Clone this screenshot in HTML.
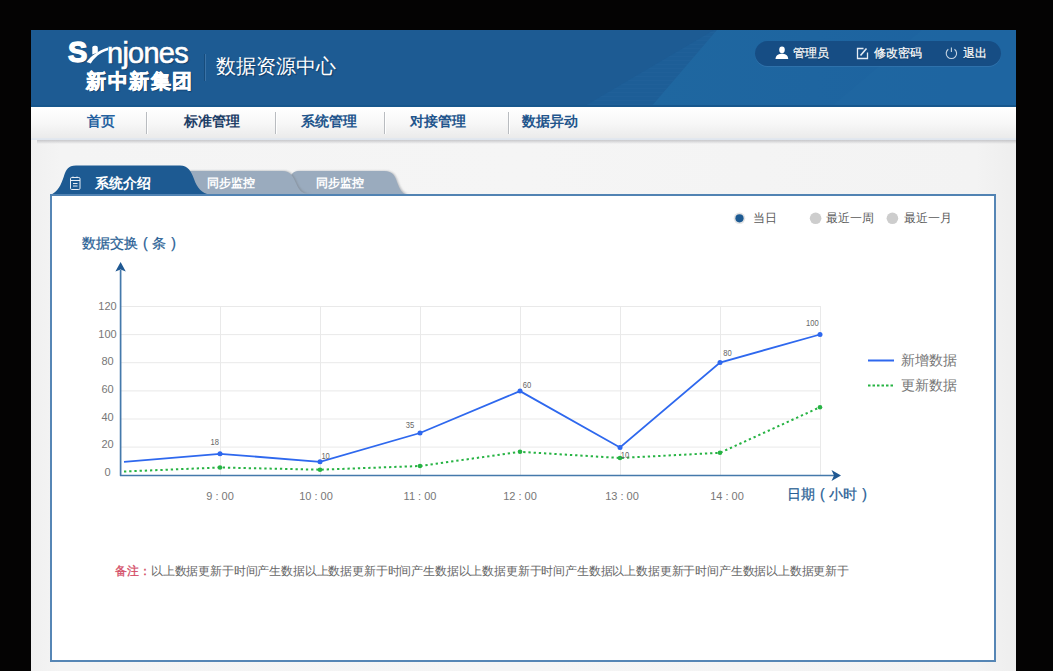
<!DOCTYPE html>
<html><head><meta charset="utf-8">
<style>
*{margin:0;padding:0;box-sizing:border-box}
html,body{width:1053px;height:671px;overflow:hidden;background:#040303;font-family:"Liberation Sans",sans-serif}
.abs{position:absolute}
#page{position:absolute;left:31px;top:30px;width:985px;height:641px;background:linear-gradient(90deg,#f0f0f0,#f4f4f4 3%,#f5f5f5 50%,#f3f3f3 96%,#eeeeee)}
#nav{position:absolute;left:31px;top:107px;width:985px;height:33px;background:linear-gradient(#ffffff,#f7f7f7 50%,#ebebeb 93%,#e3e8ef 94%,#dfe5ee);}
#navsh{position:absolute;left:37px;top:140px;width:979px;height:4px;background:linear-gradient(rgba(170,170,175,0.6),rgba(210,210,210,0))}
.nv{position:absolute;top:112px;font-size:14px;font-weight:bold;color:#22558c;line-height:18px;white-space:nowrap}
.sep{position:absolute;top:112px;width:2px;height:22px;background:linear-gradient(90deg,#b9bcc0 50%,#ffffff 50%)}
#box{position:absolute;left:50px;top:194px;width:946px;height:468px;background:#fff;border:2px solid #5686b5}
.t{position:absolute;white-space:nowrap;line-height:1}
</style></head><body>
<div id="page"></div>
<svg class="abs" style="left:31px;top:30px" width="985" height="77" viewBox="31 30 985 77">
 <defs><pattern id="stp" width="6" height="4" patternUnits="userSpaceOnUse"><rect width="6" height="1" fill="#2a6aa3" opacity="0.18"/></pattern><linearGradient id="hg" x1="651" y1="0" x2="1016" y2="0" gradientUnits="userSpaceOnUse">
  <stop offset="0" stop-color="#1f67a0"/><stop offset="0.45" stop-color="#1e65a0"/><stop offset="1" stop-color="#1c62a0"/></linearGradient></defs>
 <rect x="31" y="30" width="985" height="77" fill="#1d5b93"/>
 <polygon points="583,107 714,30 1016,30 1016,107" fill="#1d5e97"/>
 <polygon points="583,107 714,30 717,30 651,107" fill="url(#stp)"/>
 <polygon points="651,107 717,30 1016,30 1016,107" fill="url(#hg)"/>
 <polygon points="831,107 922,30 1016,30 1016,107" fill="#1f67a2" opacity="0.6"/>
 <rect x="31" y="105" width="985" height="2" fill="#17578d"/>
</svg>

<!-- logo -->
<div class="t" style="left:68px;top:38px;font-size:29px;color:#fff;font-weight:bold;-webkit-text-stroke:1.4px #fff;text-shadow:1px 1px 1px rgba(0,20,50,0.5)">S</div>
<svg class="abs" style="left:0;top:0" width="300" height="100" viewBox="0 0 300 100">
 <path d="M86.5 62 C91.5 55.5 97.5 50.8 108.2 47.4 L108.2 50.2 C99.5 52.8 94.5 57.5 90.8 63.5 Z" fill="#fff"/>
 <path d="M92.3 54.5 L92.3 47.6 Q92.3 45.8 94.5 45.8 L95.8 45.8 Q97.8 45.8 97.8 47.8 L97.8 52.5 Z" fill="#fff"/>
</svg>
<div class="t" style="left:107px;top:38.5px;font-size:29px;color:#fff;letter-spacing:-0.75px;-webkit-text-stroke:0.6px #fff;text-shadow:1px 1px 1px rgba(0,20,50,0.5)">njones</div>
<div class="t" style="left:86px;top:71px;font-size:20px;color:#fff;font-weight:bold;letter-spacing:1.6px;-webkit-text-stroke:0.7px #fff;text-shadow:1px 1px 1px rgba(0,20,50,0.5)">新中新集团</div>
<div class="abs" style="left:204px;top:54px;width:1px;height:27px;background:#174c7c"></div>
<div class="abs" style="left:205px;top:54px;width:1px;height:27px;background:#3a72a6"></div>
<div class="t" style="left:216px;top:56px;font-size:20px;color:#fff;text-shadow:1px 1px 1px rgba(0,20,50,0.45)">数据资源中心</div>
<!-- pill -->
<div class="abs" style="left:755px;top:41px;width:246px;height:25px;border-radius:13px;background:#164d84;box-shadow:0 1px 0 rgba(120,170,220,0.18)"></div>
<svg class="abs" style="left:0;top:0" width="1053" height="100" viewBox="0 0 1053 100">
 <ellipse cx="782" cy="49.8" rx="2.8" ry="3.4" fill="#fff"/>
 <path d="M775.5 59 C775.5 56 778 54 781 53.8 L783 53.8 C786 54 788.2 56 788.2 59 Z" fill="#fff"/>
 <path d="M867.5 52.5 L867.5 58.5 L857.5 58.5 L857.5 48.5 L863.5 48.5" fill="none" stroke="#e6edf5" stroke-width="1.3"/>
 <path d="M860.5 55.5 L866.5 48.5" stroke="#e6edf5" stroke-width="1.6"/>
 <path d="M948.3 49.2 A5.2 5.2 0 1 0 954.5 49.2" fill="none" stroke="#c5d4e3" stroke-width="1.1"/>
 <line x1="951.4" y1="47.5" x2="951.4" y2="52" stroke="#c5d4e3" stroke-width="1.1"/>
</svg>
<div class="t" style="left:793px;top:46.5px;font-size:12px;color:#fff;-webkit-text-stroke:0.2px #fff;text-shadow:0 1px 1px rgba(0,0,0,0.3)">管理员</div>
<div class="t" style="left:874px;top:46.5px;font-size:12px;color:#fff;-webkit-text-stroke:0.2px #fff;text-shadow:0 1px 1px rgba(0,0,0,0.3)">修改密码</div>
<div class="t" style="left:963px;top:46.5px;font-size:12px;color:#fff;-webkit-text-stroke:0.2px #fff;text-shadow:0 1px 1px rgba(0,0,0,0.3)">退出</div>

<!-- nav -->
<div id="nav"></div>
<div id="navsh"></div>
<div class="nv" style="left:87px;color:#2461a0">首页</div>
<div class="sep" style="left:146px"></div>
<div class="nv" style="left:184px;color:#1d3e66">标准管理</div>
<div class="sep" style="left:275px"></div>
<div class="nv" style="left:301px">系统管理</div>
<div class="sep" style="left:384px"></div>
<div class="nv" style="left:410px">对接管理</div>
<div class="sep" style="left:508px"></div>
<div class="nv" style="left:522px">数据异动</div>

<!-- content box -->
<div id="box"></div>

<!-- tabs -->
<svg class="abs" style="left:0;top:0" width="1053" height="671" viewBox="0 0 1053 671">
 <defs>
  <filter id="sh" x="-10%" y="-30%" width="120%" height="160%"><feGaussianBlur stdDeviation="1.2"/></filter>
 </defs>
 <!-- tab2 -->
 <path d="M282 194 C292 186 290 171 300 171 L385 171 C394 171 396 176 398 182 C401 190 404 194 410 194 Z" fill="#8a8f96" opacity="0.6" filter="url(#sh)"/>
 <path d="M280 194 C290 186 288 171 298 171 L384 171 C393 171 395 176 397 182 C400 190 402 194 407 194 Z" fill="#9aabbe"/>
 <!-- tab1 -->
 <path d="M170 194 L170 171 L283 171 C292 171 294 177 297 183 C300 190 304 194 311 194 Z" fill="#7d848c" opacity="0.7" filter="url(#sh)"/>
 <path d="M170 194 L170 171 L282 171 C291 171 293 177 296 183 C299 190 302 194 309 194 Z" fill="#9aabbe"/>
 <!-- active -->
 <path d="M50 195 C58 192 61 185 64 176 C66 170 68 165.5 76 165.5 L180 165.5 C188 165.5 191 171 194 179 C197 188 202 193 210 195 Z" fill="#1d5a92"/>
 <!-- icon -->
 <rect x="70.5" y="177.5" width="9.5" height="12" rx="1.2" fill="none" stroke="#e8eef5" stroke-width="1"/>
 <line x1="70.5" y1="180.5" x2="80" y2="180.5" stroke="#e8eef5" stroke-width="1"/>
 <line x1="73" y1="183.5" x2="77.5" y2="183.5" stroke="#e8eef5" stroke-width="1"/>
 <line x1="73" y1="186" x2="77.5" y2="186" stroke="#e8eef5" stroke-width="1"/>
 <rect x="72.5" y="176.5" width="1" height="1.5" fill="#e8eef5"/><rect x="76.5" y="176.5" width="1" height="1.5" fill="#e8eef5"/>
 <rect x="50" y="194" width="946" height="2" fill="#5183b3"/>
</svg>
<div class="t" style="left:95px;top:176px;font-size:14px;font-weight:bold;color:#fff">系统介绍</div>
<div class="t" style="left:207px;top:177px;font-size:12px;font-weight:bold;color:#fff">同步监控</div>
<div class="t" style="left:316px;top:177px;font-size:12px;font-weight:bold;color:#fff">同步监控</div>


<svg class="abs" style="left:0;top:0" width="1053" height="671" viewBox="0 0 1053 671" font-family="Liberation Sans, sans-serif">
<line x1="121" y1="306.5" x2="820" y2="306.5" stroke="#e9e9e9" stroke-width="1"/>
<line x1="121" y1="334.6" x2="820" y2="334.6" stroke="#e9e9e9" stroke-width="1"/>
<line x1="121" y1="362.7" x2="820" y2="362.7" stroke="#e9e9e9" stroke-width="1"/>
<line x1="121" y1="390.9" x2="820" y2="390.9" stroke="#e9e9e9" stroke-width="1"/>
<line x1="121" y1="419.0" x2="820" y2="419.0" stroke="#e9e9e9" stroke-width="1"/>
<line x1="121" y1="447.1" x2="820" y2="447.1" stroke="#e9e9e9" stroke-width="1"/>
<line x1="220.5" y1="306" x2="220.5" y2="475" stroke="#e9e9e9" stroke-width="1"/>
<line x1="320.5" y1="306" x2="320.5" y2="475" stroke="#e9e9e9" stroke-width="1"/>
<line x1="420.5" y1="306" x2="420.5" y2="475" stroke="#e9e9e9" stroke-width="1"/>
<line x1="520.5" y1="306" x2="520.5" y2="475" stroke="#e9e9e9" stroke-width="1"/>
<line x1="620.5" y1="306" x2="620.5" y2="475" stroke="#e9e9e9" stroke-width="1"/>
<line x1="720.5" y1="306" x2="720.5" y2="475" stroke="#e9e9e9" stroke-width="1"/>
<line x1="820.5" y1="306" x2="820.5" y2="475" stroke="#e9e9e9" stroke-width="1"/>
<path d="M120.6 270 L120.6 475.5 L834 475.5" fill="none" stroke="#4479ab" stroke-width="1.7" stroke-linejoin="round"/>
<path d="M120.6 262 L125.8 271.5 L120.6 269.5 L115.4 271.5 Z" fill="#1f5892"/>
<path d="M841 475.5 L831.5 470 L834 475.5 L831.5 481 Z" fill="#1f5892"/>
<text x="107.5" y="310.1" font-size="11" fill="#777" text-anchor="middle">120</text>
<text x="107.5" y="337.7" font-size="11" fill="#777" text-anchor="middle">100</text>
<text x="107.5" y="365.3" font-size="11" fill="#777" text-anchor="middle">80</text>
<text x="107.5" y="393.0" font-size="11" fill="#777" text-anchor="middle">60</text>
<text x="107.5" y="420.6" font-size="11" fill="#777" text-anchor="middle">40</text>
<text x="107.5" y="448.2" font-size="11" fill="#777" text-anchor="middle">20</text>
<text x="107.5" y="475.8" font-size="11" fill="#777" text-anchor="middle">0</text>
<text x="220" y="500" font-size="11" fill="#777" text-anchor="middle">9 : 00</text>
<text x="316" y="500" font-size="11" fill="#777" text-anchor="middle">10 : 00</text>
<text x="420" y="500" font-size="11" fill="#777" text-anchor="middle">11 : 00</text>
<text x="520" y="500" font-size="11" fill="#777" text-anchor="middle">12 : 00</text>
<text x="622" y="500" font-size="11" fill="#777" text-anchor="middle">13 : 00</text>
<text x="727" y="500" font-size="11" fill="#777" text-anchor="middle">14 : 00</text>
<polyline points="124,471.5 220,467.5 320,469.7 420,466 520,451.8 620,458 720,452.8 820,407.2" fill="none" stroke="#26b343" stroke-width="2" stroke-dasharray="2.3 2.9"/>
<circle cx="220" cy="467.5" r="2.3" fill="#26b343"/>
<circle cx="320" cy="469.7" r="2.3" fill="#26b343"/>
<circle cx="420" cy="466" r="2.3" fill="#26b343"/>
<circle cx="520" cy="451.8" r="2.3" fill="#26b343"/>
<circle cx="620" cy="458" r="2.3" fill="#26b343"/>
<circle cx="720" cy="452.8" r="2.3" fill="#26b343"/>
<circle cx="820" cy="407.2" r="2.3" fill="#26b343"/>
<polyline points="124,461.8 220,453.8 320,461.8 420,433 520,391.1 620,447.5 720,362.6 820,334.5" fill="none" stroke="#2e68ee" stroke-width="1.8"/>
<circle cx="220" cy="453.8" r="2.5" fill="#2e68ee"/>
<circle cx="320" cy="461.8" r="2.5" fill="#2e68ee"/>
<circle cx="420" cy="433" r="2.5" fill="#2e68ee"/>
<circle cx="520" cy="391.1" r="2.5" fill="#2e68ee"/>
<circle cx="620" cy="447.5" r="2.5" fill="#2e68ee"/>
<circle cx="720" cy="362.6" r="2.5" fill="#2e68ee"/>
<circle cx="820" cy="334.5" r="2.5" fill="#2e68ee"/>
<text transform="translate(214.8 445.0) scale(0.8 1)" font-size="9.5" fill="#666" text-anchor="middle">18</text>
<text transform="translate(325.6 459.2) scale(0.8 1)" font-size="9.5" fill="#666" text-anchor="middle">10</text>
<text transform="translate(410 428.2) scale(0.8 1)" font-size="9.5" fill="#666" text-anchor="middle">35</text>
<text transform="translate(527 387.8) scale(0.8 1)" font-size="9.5" fill="#666" text-anchor="middle">60</text>
<text transform="translate(625 457.9) scale(0.8 1)" font-size="9.5" fill="#666" text-anchor="middle">10</text>
<text transform="translate(727.4 356.2) scale(0.8 1)" font-size="9.5" fill="#666" text-anchor="middle">80</text>
<text transform="translate(812.4 325.8) scale(0.8 1)" font-size="9.5" fill="#666" text-anchor="middle">100</text>
<line x1="868" y1="360.5" x2="894" y2="360.5" stroke="#2e68ee" stroke-width="2"/>
<line x1="868" y1="385.5" x2="894" y2="385.5" stroke="#26b343" stroke-width="2" stroke-dasharray="2.5 2"/>
<circle cx="739.5" cy="218.3" r="5.8" fill="#e4e4e4"/><circle cx="739.5" cy="218.3" r="4.1" fill="#1d5a92"/>
<circle cx="815.6" cy="218.3" r="5.8" fill="#cdcdcd"/>
<circle cx="892.4" cy="218.3" r="5.8" fill="#cdcdcd"/>
</svg>
<div class="t" style="left:82px;top:236px;font-size:14px;color:#2a5f95;-webkit-text-stroke:0.25px #2a5f95;word-spacing:1px">数据交换 ( 条 )</div>
<div class="t" style="left:787px;top:487px;font-size:14px;color:#2a5f95;-webkit-text-stroke:0.25px #2a5f95;word-spacing:1px">日期 ( 小时 )</div>
<div class="t" style="left:901px;top:353px;font-size:14px;color:#777">新增数据</div>
<div class="t" style="left:901px;top:378px;font-size:14px;color:#777">更新数据</div>
<div class="t" style="left:753px;top:212px;font-size:12px;color:#5a5a5a">当日</div>
<div class="t" style="left:826px;top:212px;font-size:12px;color:#5a5a5a">最近一周</div>
<div class="t" style="left:904px;top:212px;font-size:12px;color:#5a5a5a">最近一月</div>
<div class="t" style="left:115px;top:565px;font-size:12px;color:#666;letter-spacing:-0.17px"><span style="color:#d44d67;-webkit-text-stroke:0.3px #d44d67;letter-spacing:0">备注：</span>以上数据更新于时间产生数据以上数据更新于时间产生数据以上数据更新于时间产生数据以上数据更新于时间产生数据以上数据更新于</div>

</body></html>
